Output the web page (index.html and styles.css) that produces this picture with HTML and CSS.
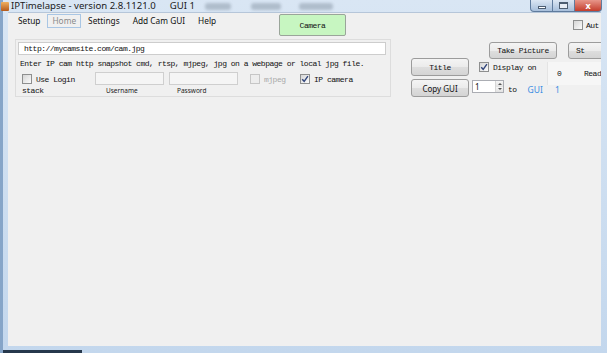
FILE: index.html
```html
<!DOCTYPE html>
<html lang="en">
<head>
    <meta charset="UTF-8">
    <title>IPTimelapse - version 2.8.1121.0</title>
    <link rel="stylesheet" href="styles.css">
</head>
<body>
    <div class="window">
        <div class="titlebar">
            <span class="app-icon"></span>
            <span class="title">IPTimelapse - version 2.8.1121.0</span>
            <span class="title title-gui">GUI 1</span>
            <span class="smudge smudge-a"></span>
            <span class="smudge smudge-b"></span>
            <span class="smudge smudge-c"></span>
            <div class="caption">
                <span class="cap cap-min"><i></i></span>
                <span class="cap cap-max"><i></i></span>
                <span class="cap cap-close">x</span>
            </div>
        </div>
        <div class="frame">
            <div class="client">
                <!-- menu + camera -->
                <div class="top-row">
                    <nav class="menu">
                        <span class="menu-item">Setup</span>
                        <span class="menu-item active">Home</span>
                        <span class="menu-item">Settings</span>
                        <span class="menu-item">Add Cam GUI</span>
                        <span class="menu-item">Help</span>
                    </nav>
                    <button class="btn btn-camera">Camera</button>
                    <label class="chk chk-auto"><span class="box"></span><span class="chk-text">Aut</span></label>
                </div>

                <div class="main">
                    <div class="group">
                        <div class="url">http://mycamsite.com/cam.jpg</div>
                        <div class="hint">Enter IP cam http snapshot cmd, rtsp, mjpeg, jpg on a webpage or local jpg file.</div>
                        <div class="login-row">
                            <label class="chk chk-login"><span class="box"></span><span class="chk-text">Use Login</span></label>
                            <div class="field"></div>
                            <div class="field field-pass"></div>
                            <label class="chk chk-mjpeg disabled"><span class="box"></span><span class="chk-text">mjpeg</span></label>
                            <label class="chk chk-ip"><span class="box checked"><svg viewBox="0 0 8 8"><path d="M1.2 4.2 L3.2 6.3 L6.9 1.2" /></svg></span><span class="chk-text">IP camera</span></label>
                        </div>
                        <div class="label-row">
                            <span class="lbl-stack">stack</span>
                            <span class="lbl-user">Username</span>
                            <span class="lbl-pass">Password</span>
                        </div>
                    </div>

                    <div class="right">
                        <div class="r-row r-row-1">
                            <button class="btn btn-take">Take Picture</button>
                            <button class="btn btn-start">St</button>
                        </div>
                        <div class="r-row r-row-2">
                            <button class="btn btn-title">Title</button>
                            <label class="chk chk-display"><span class="box checked"><svg viewBox="0 0 8 8"><path d="M1.2 4.2 L3.2 6.3 L6.9 1.2" /></svg></span><span class="chk-text">Display on</span></label>
                            <div class="read-panel">
                                <span class="read-num">0</span>
                                <span class="read-text">Read</span>
                            </div>
                        </div>
                        <div class="r-row r-row-3">
                            <button class="btn btn-copy">Copy GUI</button>
                            <div class="updown">
                                <span class="updown-val">1</span>
                                <span class="spin">
                                    <span class="spin-up"></span>
                                    <span class="spin-down"></span>
                                </span>
                            </div>
                            <span class="to">to</span>
                            <span class="gui-link">GUI</span>
                            <span class="gui-num">1</span>
                        </div>
                    </div>
                </div>
            </div>
        </div>
    </div>
</body>
</html>
```

FILE: styles.css
```css
* {
    box-sizing: border-box;
    margin: 0;
    padding: 0;
}

body {
    width: 609px;
    height: 353px;
    overflow: hidden;
    background: #ffffff;
    font-family: "Noto Sans", Arial, sans-serif;
}

.window {
    width: 607px;
    height: 353px;
    display: flex;
    flex-direction: column;
    background:
        linear-gradient(to right, #26384c 0, #26384c 82px, transparent 82px) bottom / 100% 3px no-repeat,
        linear-gradient(180deg, #d9e6f4, #c3d7ed);
    box-shadow: inset 3px 0 0 #86a5c8;
}

/* title bar */
.titlebar {
    height: 12px;
    display: flex;
    align-items: center;
    padding-left: 1px;
}

.app-icon {
    width: 8px;
    height: 9px;
    margin-right: 2px;
    border-radius: 1px;
    background: linear-gradient(#f0b060, #b55a1b);
}

.title {
    font-size: 9.6px;
    line-height: 12px;
    color: #1b1b1b;
    white-space: nowrap;
}

.title-gui {
    margin-left: 14px;
}

.smudge {
    height: 7px;
    border-radius: 3px;
    background: #9aa8b7;
    filter: blur(1.8px);
    opacity: 0.65;
}

.smudge-a {
    width: 26px;
    margin-left: 10px;
}

.smudge-b {
    width: 30px;
    margin-left: 20px;
}

.smudge-c {
    width: 34px;
    margin-left: 18px;
}

.caption {
    display: flex;
    align-self: flex-start;
    margin-left: auto;
    margin-right: 5px;
}

.cap {
    height: 12px;
    border: 1px solid #5f7b9d;
    border-top: none;
    display: flex;
    align-items: center;
    justify-content: center;
}

.cap-min {
    width: 23px;
    border-radius: 0 0 0 4px;
    background: linear-gradient(#dbe6f3, #a7bfdb);
}

.cap-min i {
    width: 8px;
    height: 3px;
    margin-top: 4px;
    background: #fff;
    border: 1px solid #4d5e72;
}

.cap-max {
    width: 22px;
    border-left: none;
    background: linear-gradient(#dbe6f3, #a7bfdb);
}

.cap-max i {
    width: 9px;
    height: 7px;
    border: 1px solid #4d5e72;
    border-top-width: 2px;
    background: #e8eef6;
}

.cap-close {
    width: 27px;
    border-left: none;
    border-radius: 0 0 4px 0;
    background: linear-gradient(#e7968a, #c43d2c);
    color: #fff;
    font-size: 9px;
    font-weight: bold;
    line-height: 10px;
}

/* frame / client */
.frame {
    flex: 1;
    display: flex;
    padding: 0 6px 7px 8px;
}

.client {
    flex: 1;
    display: flex;
    flex-direction: column;
    overflow: hidden;
    background: #f0f0f0;
    border-top: 1px solid #b6c6d9;
}

.top-row {
    display: flex;
    align-items: flex-start;
    height: 25px;
    flex-shrink: 0;
}

.menu {
    width: 271px;
    display: flex;
    gap: 1px;
    padding: 1px 0 0 4px;
    flex-shrink: 0;
}

.menu-item {
    padding: 0 5px;
    border: 1px solid transparent;
    font-size: 8.3px;
    line-height: 12px;
    color: #111;
    white-space: nowrap;
}

.menu-item.active {
    padding: 0 4px;
    border-color: #a9c6e4;
    color: #8a8a8a;
}

/* buttons */
.btn {
    flex-shrink: 0;
    font-family: "Liberation Mono", monospace;
    font-size: 8px;
    letter-spacing: -0.5px;
    color: #111;
    border: 1px solid #9c9c9c;
    border-radius: 3px;
    background: linear-gradient(#f4f4f4 0%, #ebebeb 50%, #dedede 51%, #d4d4d4 100%);
}

.btn-camera {
    margin-top: 1px;
    width: 67px;
    height: 22px;
    background: #c7f6c1;
    border-color: #9aa59a;
    border-radius: 2px;
}

/* checkboxes */
.chk {
    display: flex;
    align-items: center;
    flex-shrink: 0;
    font-family: "Liberation Mono", monospace;
    font-size: 8px;
    letter-spacing: -0.5px;
    color: #111;
    white-space: nowrap;
}

.box {
    width: 10px;
    height: 10px;
    margin-right: 4px;
    border: 1px solid #8e8f8f;
    background: linear-gradient(135deg, #d6d6d6, #fbfbfb);
    display: flex;
    flex-shrink: 0;
}

.box svg {
    width: 8px;
    height: 8px;
}

.box path {
    fill: none;
    stroke: #31457a;
    stroke-width: 1.4;
}

.chk.disabled {
    color: #a9a9a9;
}

.chk.disabled .box {
    border-color: #c6c6c6;
    background: #ededed;
}

.chk-auto {
    margin: 7px 0 0 227px;
}

.chk-auto .box {
    margin-right: 3px;
}

/* left group */
.main {
    display: flex;
    align-items: flex-start;
    margin-top: 1px;
}

.group {
    width: 376px;
    height: 58px;
    margin-left: 7px;
    padding: 2px 0 0 2px;
    border: 1px solid #dddddd;
    flex-shrink: 0;
}

.url {
    width: 368px;
    height: 13px;
    padding-left: 5px;
    background: #fff;
    border: 1px solid #cdcdcd;
    font-family: "Liberation Mono", monospace;
    font-size: 8px;
    letter-spacing: -0.5px;
    line-height: 11px;
    color: #111;
}

.hint {
    margin: 4px 0 0 2px;
    font-family: "Liberation Mono", monospace;
    font-size: 8px;
    letter-spacing: -0.5px;
    line-height: 9px;
    color: #111;
    white-space: nowrap;
}

.login-row {
    display: flex;
    align-items: center;
    height: 14px;
    margin-top: 3px;
}

.chk-login {
    width: 73px;
    margin-left: 4px;
    margin-top: 2px;
}

.field {
    width: 69px;
    height: 13px;
    background: #f5f5f5;
    border: 1px solid #cfcfcf;
}

.field-pass {
    margin-left: 5px;
}

.chk-mjpeg {
    width: 50px;
    margin-left: 12px;
    margin-top: 2px;
}

.chk-ip {
    margin-top: 2px;
}

.label-row {
    display: flex;
    align-items: center;
    height: 9px;
    margin-top: 1px;
    padding-left: 4px;
    white-space: nowrap;
}

.lbl-stack {
    width: 84px;
    font-family: "Liberation Mono", monospace;
    font-size: 8px;
    letter-spacing: -0.5px;
    color: #111;
}

.lbl-user,
.lbl-pass {
    font-size: 6.5px;
    color: #222;
}

.lbl-user {
    width: 71px;
}

/* right side */
.right {
    width: 215px;
    flex-shrink: 0;
    margin-left: 20px;
    padding-top: 3px;
}

.r-row {
    display: flex;
    align-items: center;
}

.r-row-1 {
    padding-left: 78px;
    gap: 11px;
}

.btn-take {
    width: 68px;
    height: 17px;
}

.btn-start {
    width: 60px;
    height: 17px;
    text-align: left;
    padding-left: 7px;
}

.r-row-2 {
    margin-top: -1px;
}

.btn-title,
.btn-copy {
    width: 58px;
    height: 18px;
}

.chk-display {
    width: 68px;
    margin-left: 10px;
}

.read-panel {
    align-self: flex-start;
    display: flex;
    align-items: center;
    width: 70px;
    height: 23px;
    margin: 4px 0 -9px 0;
    background: #f6f6f6;
    border-left: 1px solid #e4e4e4;
    font-family: "Liberation Mono", monospace;
    font-size: 8px;
    letter-spacing: -0.5px;
    color: #111;
    white-space: nowrap;
}

.read-num {
    margin-left: 9px;
    width: 27px;
}

.r-row-3 {
    margin-top: 3px;
}

.btn-copy {
    font-family: "Noto Sans", Arial, sans-serif;
    font-size: 8px;
    letter-spacing: 0;
}

.updown {
    display: flex;
    width: 32px;
    height: 13px;
    margin-left: 3px;
    align-self: flex-start;
    margin-top: 1px;
    background: #fff;
    border: 1px solid #abadb3;
}

.updown-val {
    flex: 1;
    padding-left: 2px;
    font-size: 8px;
    line-height: 11px;
    color: #111;
}

.spin {
    width: 8px;
    display: flex;
    flex-direction: column;
    border-left: 1px solid #d6d6d6;
}

.spin-up,
.spin-down {
    flex: 1;
    display: flex;
    align-items: center;
    justify-content: center;
    background: linear-gradient(#f6f6f6, #e2e2e2);
}

.spin-up::after {
    content: "";
    border: 2px solid transparent;
    border-bottom: 2px solid #555;
    border-top: none;
}

.spin-down::after {
    content: "";
    border: 2px solid transparent;
    border-top: 2px solid #555;
    border-bottom: none;
}

.to {
    margin: 3px 0 0 4px;
    font-family: "Liberation Mono", monospace;
    font-size: 8px;
    letter-spacing: -0.5px;
    color: #111;
}

.gui-link,
.gui-num {
    margin-top: 2px;
    font-size: 8.5px;
    color: #3b8de2;
}

.gui-link {
    margin-left: 11px;
}

.gui-num {
    margin-left: 12px;
}
```
